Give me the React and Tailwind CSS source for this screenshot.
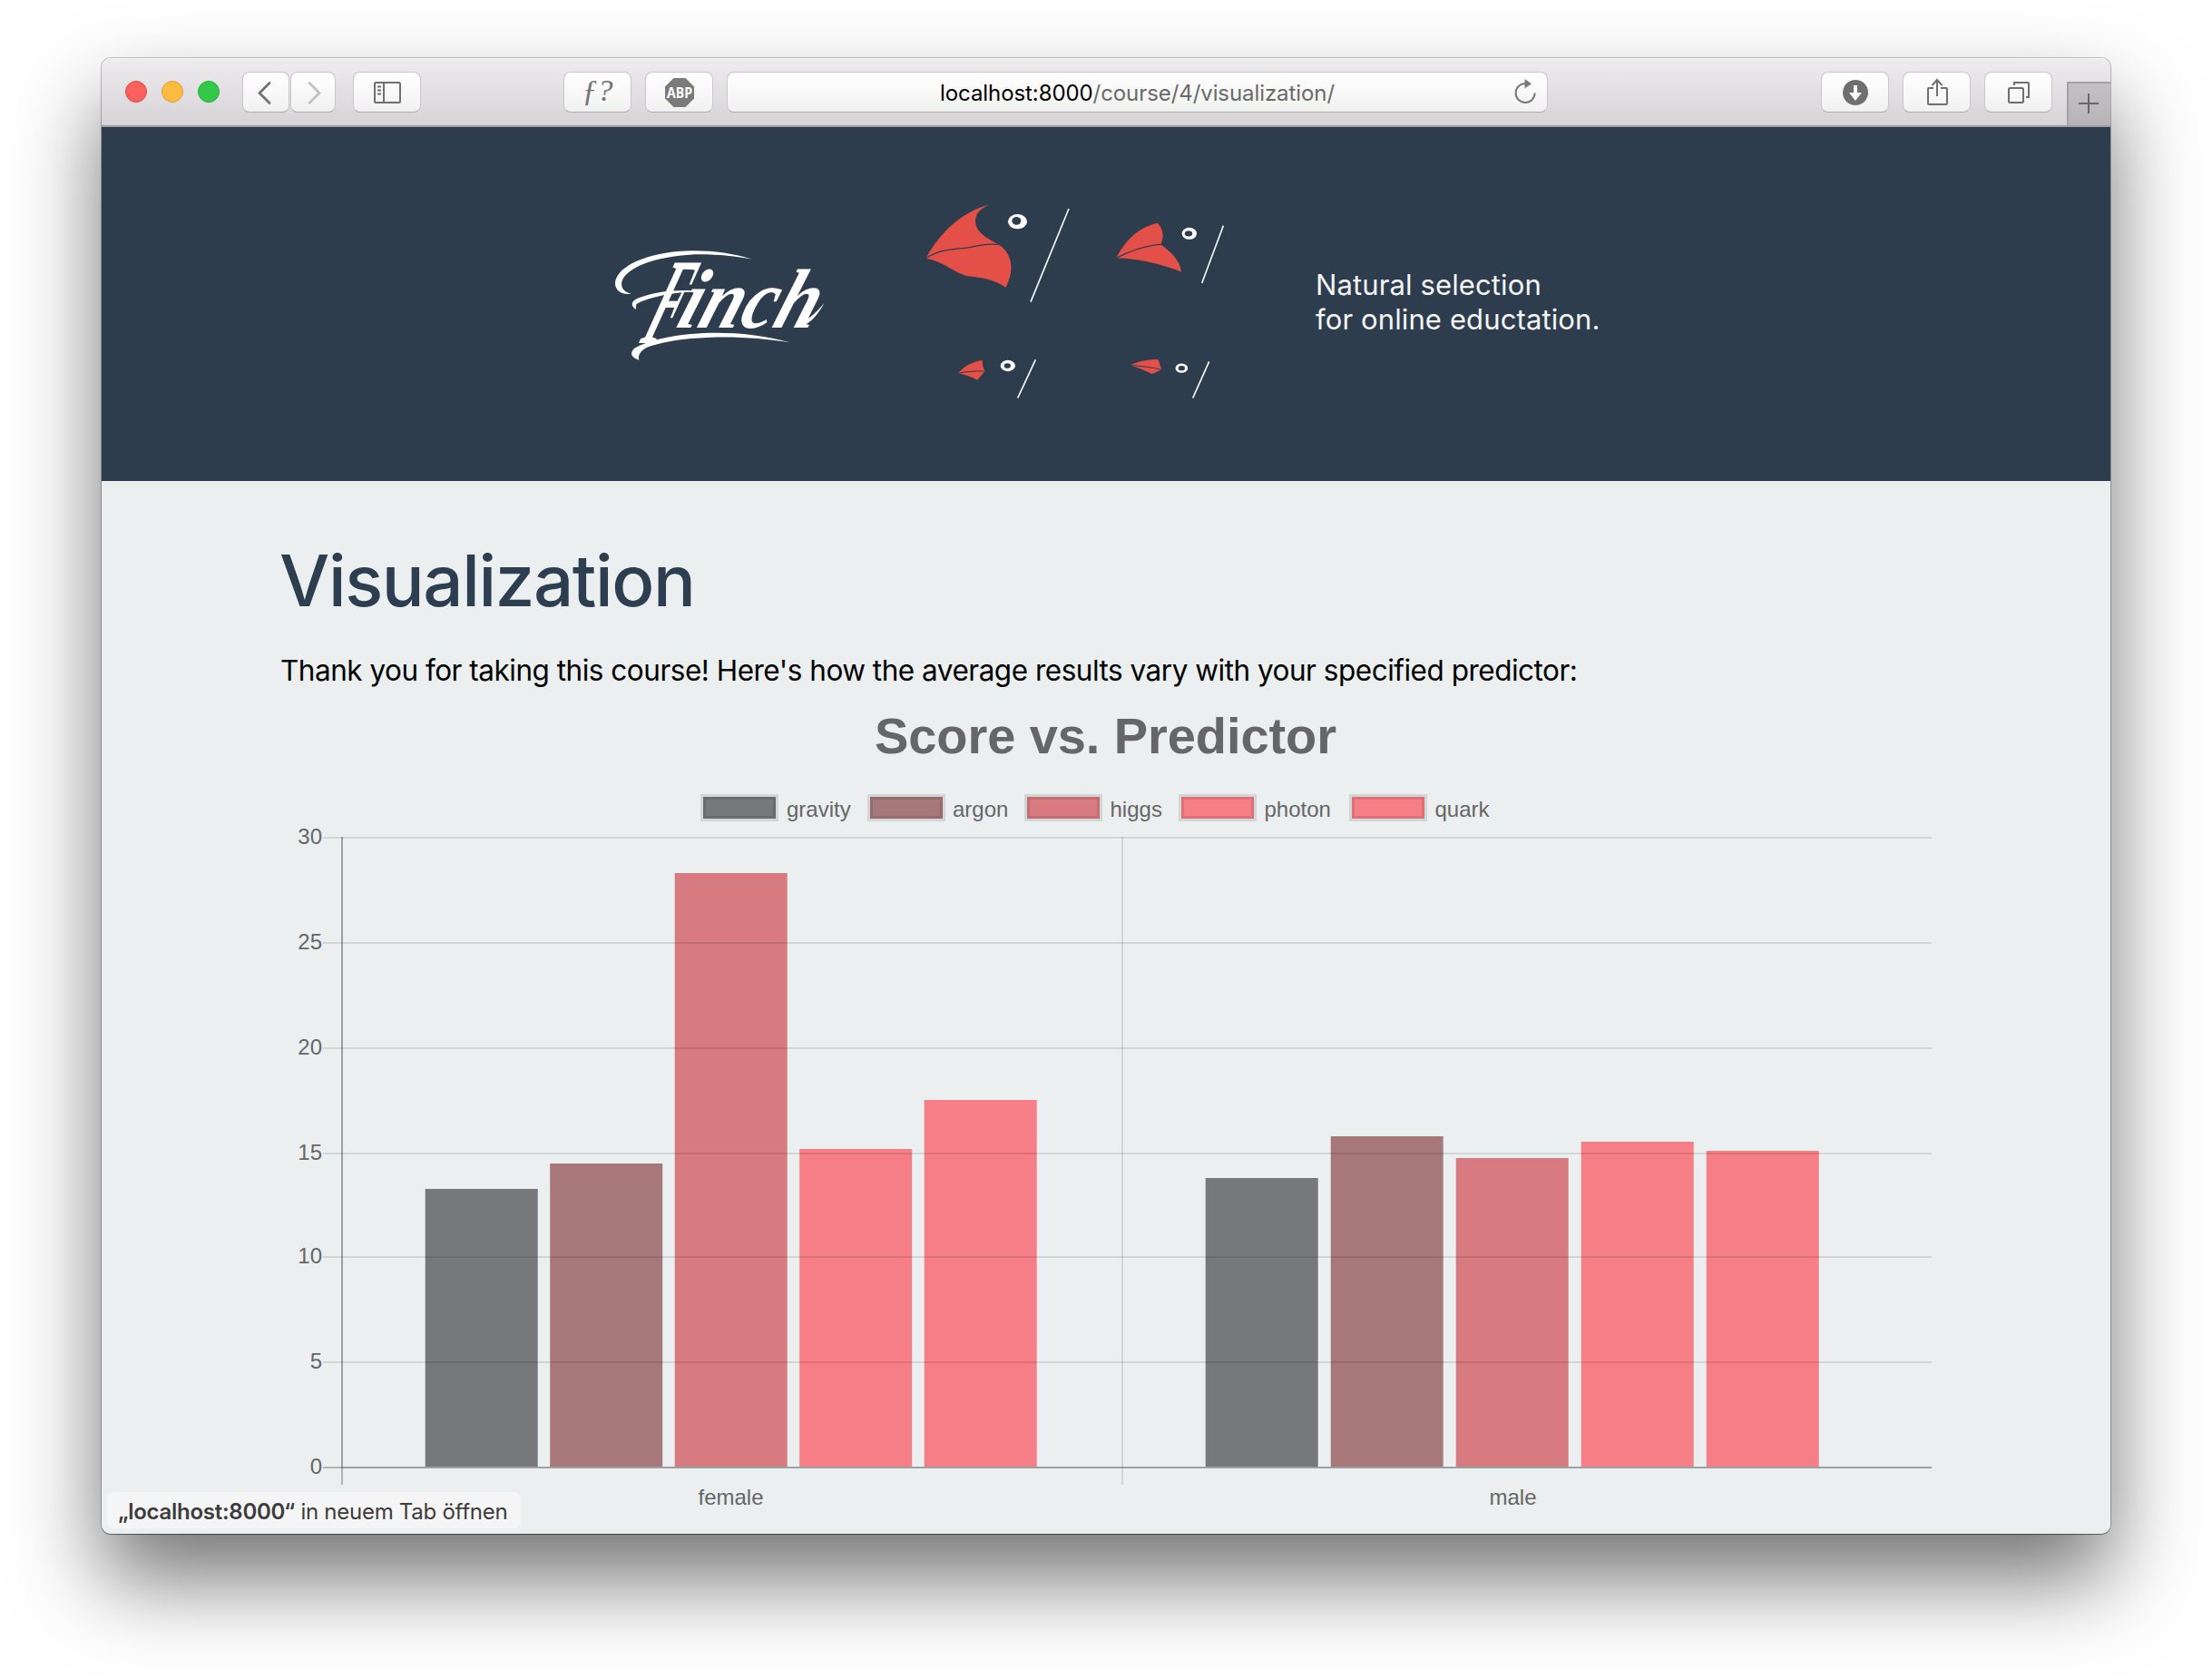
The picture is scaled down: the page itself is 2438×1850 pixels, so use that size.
const ROWS = [
  { name: "gravity", color: "#77787a", box: 775, label: 867 },
  { name: "argon", color: "#a77879", box: 959, label: 1050 },
  { name: "higgs", color: "#d87b80", box: 1132, label: 1223.5 },
  { name: "photon", color: "#f67e86", box: 1302, label: 1393.5 },
  { name: "quark", color: "#f67e86", box: 1490, label: 1581.5 },
];

const BARS = [
  { x: 468.7, step: 137.5, tops: [1310, 1282, 962, 1266, 1212] },
  { x: 1328.7, step: 138, tops: [1298, 1252, 1276, 1258, 1268] },
];

const TICKS = [
  { v: 30, y: 922 },
  { v: 25, y: 1038 },
  { v: 20, y: 1154 },
  { v: 15, y: 1270 },
  { v: 10, y: 1384 },
  { v: 5, y: 1500 },
];

function ToolButton({ className, children }) {
  return (
    <div
      className={`flex h-[45px] shrink-0 items-center justify-center rounded-[8px] border border-[#c9c7ca] border-b-[#aeacaf] bg-gradient-to-b from-white to-[#f1f1f1] ${className}`}
    >
      {children}
    </div>
  );
}

function Toolbar() {
  return (
    <div className="flex h-[76px] shrink-0 items-start border-b-2 border-[#a09fa4] bg-gradient-to-b from-[#eeecef] to-[#d5d3d6] pt-[15px] shadow-[inset_0_1px_0_#f8f7f8]">
      <div className="ml-[26px] mt-[10px] flex gap-4">
        <div className="size-6 rounded-full border border-[#e14a45] bg-[#fc605c]" />
        <div className="size-6 rounded-full border border-[#dfa032] bg-[#fdbc40]" />
        <div className="size-6 rounded-full border border-[#27aa35] bg-[#34c84a]" />
      </div>
      <ToolButton className="ml-[25px] w-[52px]">
        <svg className="mr-[3px]" width="20" height="26" viewBox="0 0 20 26" fill="none" stroke="#737373" strokeWidth="2.8" strokeLinecap="round" strokeLinejoin="round">
          <path d="M15 2.500 L4 13.500 L15 24.500" />
        </svg>
      </ToolButton>
      <ToolButton className="ml-[1px] w-[50px]">
        <svg width="20" height="26" viewBox="0 0 20 26" fill="none" stroke="#c1c1c1" strokeWidth="2.8" strokeLinecap="round" strokeLinejoin="round">
          <path d="M6 2.500 L17 13.500 L6 24.500" />
        </svg>
      </ToolButton>
      <ToolButton className="ml-[19px] w-[75px]">
        <svg width="30" height="24" viewBox="0 0 30 24" fill="none" stroke="#6f6f6f" strokeWidth="2">
          <rect x="1" y="1" width="28" height="22" rx="1.5" />
          <path d="M11 1 V23 M4 5.500 H8 M4 9.500 H8 M4 13.500 H8" />
        </svg>
      </ToolButton>
      <ToolButton className="ml-[157px] w-[75px]">
        <span className="-mt-1 font-['Liberation_Serif',serif] text-[34px] leading-none text-[#737373]">
          <i>ƒ</i>
          <i>?</i>
        </span>
      </ToolButton>
      <ToolButton className="ml-[15px] w-[75px]">
        <svg className="overflow-visible" width="32" height="32" viewBox="0 0 32 32">
          <path d="M9.500 0 H22.500 L32 9.500 V22.500 L22.500 32 H9.500 L0 22.500 V9.500 Z" fill="#7a7a7a" />
          <text x="16" y="21.700" textAnchor="middle" textLength="28" lengthAdjust="spacingAndGlyphs" fontFamily="Open Sans, sans-serif" fontWeight="700" fontSize="16.500" fill="#fff">ABP</text>
        </svg>
      </ToolButton>
      <ToolButton className="relative ml-[15px] w-[905px]">
        <div className="pt-[3px] font-[Inter,sans-serif] text-[24px] leading-none tracking-[-0.08px] text-[#6a6a6a]">
          <span className="text-black">localhost:8000</span>/course/4/visualization/
        </div>
        <svg className="absolute right-[12px] top-[7px]" width="24" height="28" viewBox="0 0 24 28" fill="none" stroke="#7a7a7a" strokeWidth="2">
          <path d="M12.500 5 A10.500 10.500 0 1 0 22.600 15.500" />
          <path d="M11.500 0 L19 5.300 L11.500 10.600 Z" fill="#7a7a7a" stroke="none" />
        </svg>
      </ToolButton>
      <ToolButton className="ml-[301px] w-[75px]">
        <svg width="28" height="28" viewBox="0 0 28 28">
          <circle cx="14" cy="14" r="14" fill="#6f6f6f" />
          <path d="M12 6 H16 V14 H21 L14 23 L7 14 H12 Z" fill="#fff" />
        </svg>
      </ToolButton>
      <ToolButton className="ml-[15px] w-[75px]">
        <svg width="24" height="32" viewBox="0 0 24 32" fill="none" stroke="#6f6f6f" strokeWidth="2">
          <path d="M8 11 H3 Q2 11 2 12 V28 Q2 29 3 29 H22 Q23 29 23 28 V12 Q23 11 22 11 H16" />
          <path d="M12 2 V20 M6.500 8 L12 2 L17.500 8" />
        </svg>
      </ToolButton>
      <ToolButton className="ml-[15px] w-[75px]">
        <svg width="26" height="26" viewBox="0 0 26 26" fill="none" stroke="#6f6f6f" strokeWidth="2">
          <rect x="2" y="8" width="16" height="16" rx="1.5" />
          <path d="M8 5 V2 H23 Q24 2 24 3 V18 H21" />
        </svg>
      </ToolButton>
      <div className="ml-auto mt-[11px] flex h-[48px] w-[48px] items-center justify-center border-l-2 border-t-2 border-[#a3a1a6] bg-gradient-to-b from-[#c3c1c5] to-[#b6b4b7]">
        <svg className="mb-[2px] mr-[2px]" width="22" height="22" viewBox="0 0 22 22" stroke="#68666b" strokeWidth="2">
          <path d="M11 0 V22 M0 11 H22" />
        </svg>
      </div>
    </div>
  );
}

function FinchLogo() {
  return (
    <svg className="mt-[50px] shrink-0 overflow-visible" width="270" height="150" viewBox="0 0 810 450" fill="#fff">
      <path d="M508 77 C430 52 340 44 260 51 C140 62 52 108 54 160 C56 182 78 196 107 191 C84 186 72 172 76 152 C88 104 190 66 320 61 C390 60 450 67 508 77 Z" />
      <path d="M122 243 C106 232 104 216 128 206 C190 182 260 174 345 184 C260 182 160 202 124 226 Z" />
      <path d="M133 410 C106 402 100 386 120 370 C210 322 430 296 632 352 C480 326 280 326 160 368 C140 378 128 392 133 410 Z" />
      <g fontFamily="Liberation Serif, serif" fontStyle="italic" fontWeight="700">
        <text transform="translate(132 355) skewX(-21) scale(0.4 1)" fontSize="405">F</text>
        <text transform="translate(250 302) skewX(-19) scale(1 1.08)" fontSize="258" textLength="455" lengthAdjust="spacingAndGlyphs">inch</text>
      </g>
      <path d="M668 300 C700 290 728 256 745 222 C722 250 700 272 672 282 Z" />
    </svg>
  );
}

function Beaks() {
  return (
    <svg className="ml-[70px] shrink-0" width="370" height="240" viewBox="0 0 1110 720">
      <g fill="#e44f48">
        <path d="M60 225 C105 145 170 75 271 46 C232 65 222 85 226 110 C234 145 270 160 302 178 C340 205 360 250 326 320 C280 290 240 288 200 283 C150 270 120 232 60 225 Z" />
        <path d="M691 223 C720 165 765 120 828 107 C846 128 850 150 838 178 C875 205 903 235 906 269 C850 245 770 225 691 223 Z" />
        <path d="M168 604 C188 580 215 566 248 560 C248 575 250 585 257 597 L231 626 C210 615 190 608 168 604 Z" />
        <path d="M736 577 C765 565 795 558 829 558 L841 592 L810 606 C785 595 760 584 736 577 Z" />
      </g>
      <g fill="none" stroke="#2e3d4e" strokeWidth="4">
        <path d="M60 225 C100 198 140 193 190 190 C240 186 235 173 302 178" />
        <path d="M691 223 C745 195 790 180 840 178" />
        <path d="M168 604 C195 598 225 596 257 597" strokeWidth="3" />
        <path d="M736 577 C775 581 805 583 841 592" strokeWidth="3" />
      </g>
      <g fill="#fff">
        <ellipse cx="364.500" cy="102.500" rx="31.500" ry="24.500" />
        <ellipse cx="932.500" cy="142" rx="24.500" ry="19.500" />
        <ellipse cx="332.500" cy="579" rx="24.500" ry="18.500" />
        <ellipse cx="907" cy="587" rx="20.500" ry="15.500" />
      </g>
      <g fill="#2e3d4e">
        <ellipse cx="361" cy="100" rx="15" ry="13" />
        <ellipse cx="930" cy="142" rx="12.500" ry="9.500" />
        <ellipse cx="331" cy="579" rx="11" ry="8.500" />
        <ellipse cx="907" cy="587" rx="11" ry="8" />
      </g>
      <path d="M534 60 L408 368 M1045 116 L974 306 M424 559 L365 686 M998 565 L944 686" stroke="#f3f4f5" strokeWidth="5" />
    </svg>
  );
}

function Chart() {
  return (
    <svg className="-mt-[6px] block" width="1820" height="910" viewBox="310 770 1820 910" fontFamily="Liberation Sans, sans-serif" fontSize="24" fill="#666">
      <text x="1218.500" y="829.500" textAnchor="middle" fontSize="56" fontWeight="700" textLength="509">Score vs. Predictor</text>
      {ROWS.map((r) => (
        <g key={r.name}>
          <rect x={r.box} y="878" width="80" height="24" fill={r.color} />
          <rect x={r.box} y="878" width="80" height="24" fill="none" stroke="#000" strokeOpacity="0.1" strokeWidth="6" />
          <text x={r.label} y="899.500">{r.name}</text>
        </g>
      ))}
      {BARS.map((g) =>
        g.tops.map((t, i) => (
          <rect key={g.x + i} x={g.x + i * g.step} y={t} width="124" height={1616 - t} fill={ROWS[i].color} />
        ))
      )}
      {TICKS.map((t) => (
        <g key={t.v}>
          <rect x="356" y={t.y} width="1773" height="2" fill="#000" fillOpacity="0.1" />
          <text x="355" y={t.y + 8} textAnchor="end">{t.v}</text>
        </g>
      ))}
      <text x="355" y="1624" textAnchor="end">0</text>
      <rect x="356" y="1616" width="1773" height="2" fill="#000" fillOpacity="0.25" />
      <rect x="377" y="1616" width="1752" height="2" fill="#000" fillOpacity="0.1" />
      <rect x="376" y="922" width="2" height="714" fill="#000" fillOpacity="0.25" />
      <rect x="376" y="922" width="2" height="695" fill="#000" fillOpacity="0.1" />
      <rect x="1236" y="922" width="2" height="714" fill="#000" fillOpacity="0.1" />
      <text x="805.500" y="1658" textAnchor="middle">female</text>
      <text x="1667.500" y="1658" textAnchor="middle">male</text>
    </svg>
  );
}

export default function App() {
  return (
    <div className="h-[1850px] w-[2438px] overflow-hidden bg-white px-[112px] pt-[64px]">
      <div className="relative h-[1626px] w-[2214px] rounded-[10px] shadow-[0_0_0_1px_rgba(0,0,0,0.22),0_1px_1px_rgba(0,0,0,0.35),0_50px_96px_rgba(0,0,0,0.55)]">
        <div className="flex h-full flex-col overflow-hidden rounded-[10px] bg-[#ebeff0]">
          <Toolbar />
          <header className="flex h-[390px] shrink-0 items-start bg-[#2e3d4e] pl-[548px] pt-[70px]">
            <FinchLogo />
            <Beaks />
            <p className="ml-[80px] mt-[85px] whitespace-nowrap font-[Inter,sans-serif] text-[31px] leading-[37.500px] tracking-[0.12px] text-[#f4f5f6]">
              Natural selection
              <br />
              for online eductation.
            </p>
          </header>
          <main className="h-[1160px] overflow-hidden pl-[198px] pt-[62px]">
            <h1 className="-ml-[2px] font-[Inter,sans-serif] text-[78px] font-medium leading-[96px] tracking-[-1.4px] text-[#2c3e50]">Visualization</h1>
            <p className="-ml-[1px] mb-[13px] mt-[27px] whitespace-nowrap font-[Inter,sans-serif] text-[31.500px] leading-[48px] tracking-[-0.49px] text-black">
              Thank you for taking this course! Here's how the average results vary with your specified predictor:
            </p>
            <Chart />
          </main>
        </div>
        <div className="absolute bottom-[6px] left-[6px] flex h-[40px] w-[456px] items-center rounded-[6px] bg-[#f5f5f5] pl-[12px] pt-[3px] font-[Inter,sans-serif] text-[24px] leading-none tracking-[-0.27px] text-[#3d3b3e]">
          <span className="whitespace-pre"><b className="font-semibold">„localhost:8000“</b> in neuem Tab öffnen</span>
        </div>
      </div>
    </div>
  );
}
